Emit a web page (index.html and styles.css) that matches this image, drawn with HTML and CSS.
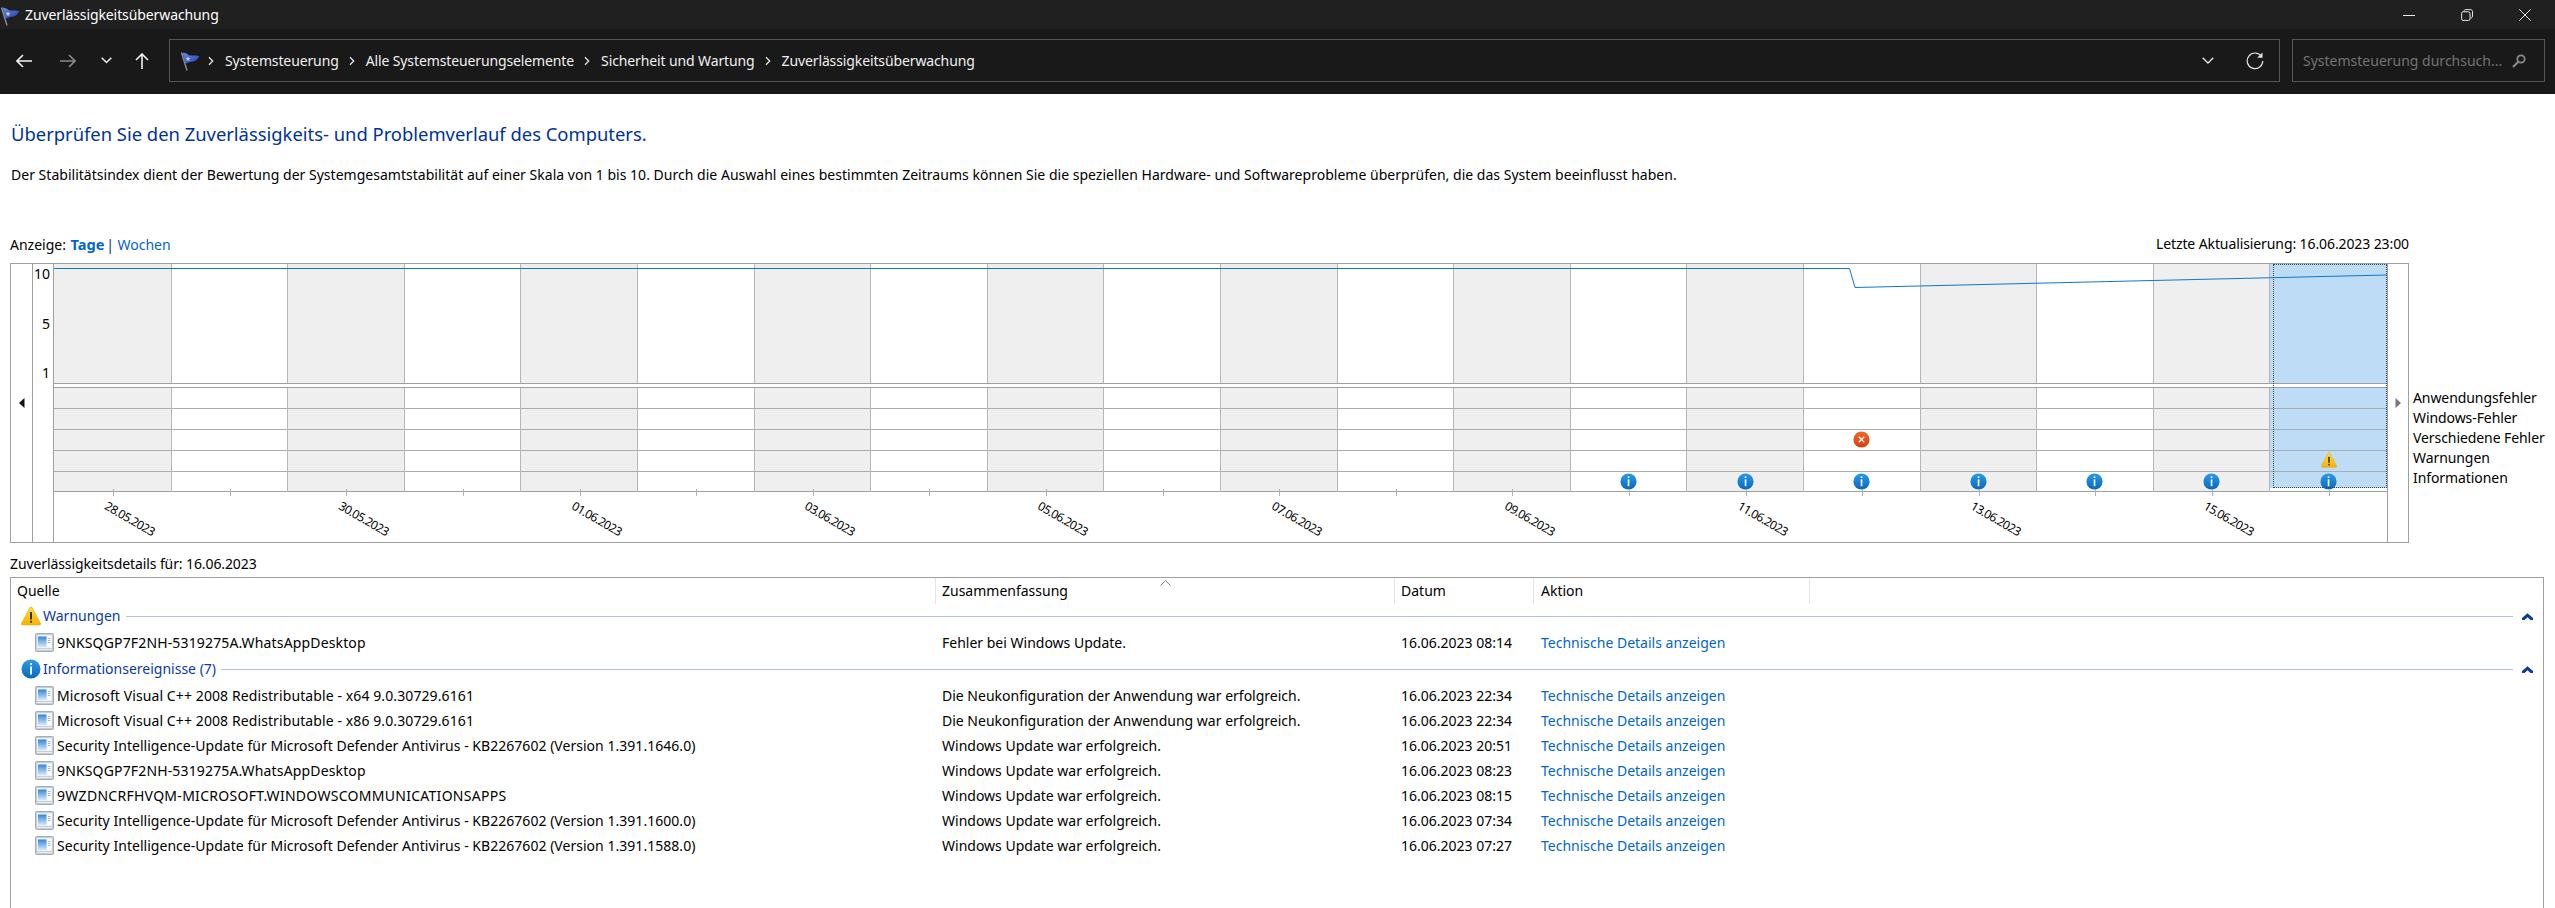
FILE: index.html
```html
<!DOCTYPE html>
<html lang="de">
<head>
<meta charset="utf-8">
<title>Zuverlässigkeitsüberwachung</title>
<link rel="stylesheet" href="styles.css">
</head>
<body>
<svg class="defs" aria-hidden="true">
  <defs>
    <linearGradient id="gBlue" x1="0" y1="0" x2="0" y2="1"><stop offset="0" stop-color="#2a9be6"/><stop offset="1" stop-color="#0a68bd"/></linearGradient>
    <linearGradient id="gRed" x1="0" y1="0" x2="0" y2="1"><stop offset="0" stop-color="#ee6a2a"/><stop offset="1" stop-color="#d63f0e"/></linearGradient>
    <linearGradient id="gYel" x1="0" y1="0" x2="0" y2="1"><stop offset="0" stop-color="#ffdc4a"/><stop offset="1" stop-color="#f5b400"/></linearGradient>
    <linearGradient id="gFlag" x1="0" y1="0" x2="1" y2="1"><stop offset="0" stop-color="#6a86e6"/><stop offset="1" stop-color="#1f3fb0"/></linearGradient>
    <linearGradient id="gApp" x1="0" y1="0" x2="0" y2="1"><stop offset="0" stop-color="#2f86d8"/><stop offset="1" stop-color="#d6e8f8"/></linearGradient>
    <symbol id="flag" viewBox="0 0 20 20">
      <path d="M1.5 1.5 L7 19.5" stroke="#8e8e8e" stroke-width="1.4" fill="none"/>
      <path d="M2.5 2 C6 .5 8 4 10 4.5 C12.5 5 15 3.5 19.5 5.5 C17 8 16.500 10 13.500 10.500 C10.500 11 8.500 11 5.500 13 Z" fill="url(#gFlag)"/>
      <path d="M8 5.500 l.7 1.600 1.700.1-1.300 1.100.4 1.600-1.500-.9-1.400.9.400-1.600-1.300-1.100 1.700-.1z" fill="#c9d6fb"/>
    </symbol>
    <symbol id="info" viewBox="0 0 20 20">
      <circle cx="10" cy="10" r="9.500" fill="url(#gBlue)"/>
      <rect x="9.100" y="4" width="1.900" height="1.900" fill="#fff"/>
      <rect x="9.100" y="7.500" width="1.900" height="8" fill="#fff"/>
    </symbol>
    <symbol id="warn" viewBox="0 0 20 20">
      <path d="M10 1 C10.600 1 11 1.300 11.300 1.900 L19.400 17.200 C19.800 18 19.400 19 18.400 19 L1.600 19 C.6 19 .2 18 .6 17.200 L8.700 1.900 C9 1.300 9.400 1 10 1 Z" fill="url(#gYel)" stroke="#e2a400" stroke-width=".6"/>
      <rect x="9.100" y="6" width="1.800" height="7.500" fill="#222"/>
      <rect x="9.100" y="14.800" width="1.800" height="1.900" fill="#222"/>
    </symbol>
    <symbol id="err" viewBox="0 0 20 20">
      <circle cx="10" cy="10" r="9.500" fill="url(#gRed)"/>
      <path d="M6.800 6.800 L13.200 13.200 M13.200 6.800 L6.800 13.200" stroke="#fff" stroke-width="1.500" fill="none"/>
    </symbol>
    <symbol id="app" viewBox="0 0 19 19">
      <rect x=".5" y=".5" width="18" height="18" rx="1" fill="#c6ccd4" stroke="#a7adb5"/>
      <rect x="2" y="2" width="15" height="13" fill="#eef3f9"/>
      <rect x="3" y="3.500" width="8.500" height="10.500" fill="url(#gApp)"/>
      <rect x="12.500" y="3.500" width="3.500" height="10.500" fill="#fff"/>
      <path d="M13 5.500h2.500M13 7.500h2.500M13 9.500h2.500" stroke="#8fa6bf" stroke-width=".8"/>
      <rect x="2" y="16" width="15" height="1" fill="#eceef1"/>
    </symbol>
    <symbol id="collapse" viewBox="0 0 11 7">
      <path d="M5.500 .2 L11 5 V7 H8.500 L5.500 4.200 L2.500 7 H0 V5 Z" fill="#0a3a9c"/>
    </symbol>
    <symbol id="crumb" viewBox="0 0 6 10">
      <path d="M1 1.200 L4.700 5 L1 8.800" stroke="#e4e4e4" stroke-width="1.300" fill="none"/>
    </symbol>
  </defs>
</svg>

<header class="titlebar">
  <svg class="title-flag"><use href="#flag"/></svg>
  <span class="title-text">Zuverlässigkeitsüberwachung</span>
  <div class="winctl">
    <svg viewBox="0 0 12 12" class="wc"><path d="M0 6.500H12" stroke="#e8e8e8" fill="none"/></svg>
    <svg viewBox="0 0 12 12" class="wc"><path d="M3 2.500 C3 1.200 3.800.6 5 .6 H9.500 C10.700.6 11.500 1.400 11.500 2.600 V7 C11.500 8.200 10.900 9 9.700 9" stroke="#e8e8e8" fill="none"/><rect x=".6" y="2.800" width="8.400" height="8.600" rx="1.500" stroke="#e8e8e8" fill="none"/></svg>
    <svg viewBox="0 0 12 12" class="wc"><path d="M.3.3 L11.700 11.700 M11.700.3 L.3 11.700" stroke="#e8e8e8" fill="none"/></svg>
  </div>
</header>

<nav class="toolbar">
  <div class="navs">
    <svg class="nav-arrow" viewBox="0 0 16 14"><path d="M16 7H1 M7 1 L1 7 L7 13" stroke="#f2f2f2" stroke-width="1.600" fill="none"/></svg>
    <svg class="nav-arrow nav-fwd" viewBox="0 0 16 14"><path d="M0 7H15 M9 1 L15 7 L9 13" stroke="#8a8a8a" stroke-width="1.600" fill="none"/></svg>
    <svg class="nav-chev" viewBox="0 0 11 7"><path d="M.7 .8 L5.500 5.500 L10.300 .8" stroke="#e8e8e8" stroke-width="1.600" fill="none"/></svg>
    <svg class="nav-up" viewBox="0 0 16 16"><path d="M8 16V1 M2 7 L8 1 L14 7" stroke="#f2f2f2" stroke-width="1.600" fill="none"/></svg>
  </div>
  <div class="address">
    <svg class="addr-flag"><use href="#flag"/></svg>
    <svg class="crumb crumb-first"><use href="#crumb"/></svg>
    <span>Systemsteuerung</span>
    <svg class="crumb"><use href="#crumb"/></svg>
    <span>Alle Systemsteuerungselemente</span>
    <svg class="crumb"><use href="#crumb"/></svg>
    <span>Sicherheit und Wartung</span>
    <svg class="crumb"><use href="#crumb"/></svg>
    <span>Zuverlässigkeitsüberwachung</span>
    <svg class="addr-drop" viewBox="0 0 12 7"><path d="M.7 .7 L6 6 L11.300 .7" stroke="#e8e8e8" stroke-width="1.300" fill="none"/></svg>
    <svg class="addr-refresh" viewBox="0 0 18 18"><path d="M15.500 4.500 A7.800 7.800 0 1 0 16.800 9" stroke="#e4e4e4" stroke-width="1.200" fill="none"/><path d="M16.500 .5 V5.800 H11.200 Z" fill="#e4e4e4"/></svg>
  </div>
  <div class="search">
    <span>Systemsteuerung durchsuch...</span>
    <svg class="search-icon" viewBox="0 0 14 14"><circle cx="9" cy="5" r="3.700" stroke="#8a8a8a" stroke-width="1.800" fill="none"/><path d="M6.300 7.700 L1 13" stroke="#8a8a8a" stroke-width="2.200" fill="none"/></svg>
  </div>
</nav>

<main class="content">
  <h1 class="heading">Überprüfen Sie den Zuverlässigkeits- und Problemverlauf des Computers.</h1>
  <p class="intro">Der Stabilitätsindex dient der Bewertung der Systemgesamtstabilität auf einer Skala von 1 bis 10. Durch die Auswahl eines bestimmten Zeitraums können Sie die speziellen Hardware- und Softwareprobleme überprüfen, die das System beeinflusst haben.</p>

  <div class="viewbar">
    <div>Anzeige: <b class="active">Tage</b> <span class="sep">|</span> <a class="link">Wochen</a></div>
    <div class="tight">Letzte Aktualisierung: 16.06.2023 23:00</div>
  </div>

  <div class="chart-row">
    <div class="chart">
      <div class="side side-left"><svg class="arrow" viewBox="0 0 6 10"><path d="M5.500 0 V10 L0 5 Z" fill="#111"/></svg></div>
      <div class="yaxis"><span>10</span><span>5</span><span>1</span></div>
      <div class="plot">
        <div class="cols upper">
          <div></div><div></div><div></div><div></div><div></div><div></div><div></div><div></div><div></div><div></div>
          <div></div><div></div><div></div><div></div><div></div><div></div><div></div><div></div><div></div><div></div>
        </div>
        <div class="cols lower">
          <div></div><div></div><div></div><div></div><div></div><div></div><div></div><div></div><div></div><div></div>
          <div></div><div></div><div></div>
          <div><svg class="mark m-info"><use href="#info"/></svg></div>
          <div><svg class="mark m-info"><use href="#info"/></svg></div>
          <div><svg class="mark m-err"><use href="#err"/></svg><svg class="mark m-info"><use href="#info"/></svg></div>
          <div><svg class="mark m-info"><use href="#info"/></svg></div>
          <div><svg class="mark m-info"><use href="#info"/></svg></div>
          <div><svg class="mark m-info"><use href="#info"/></svg></div>
          <div><svg class="mark m-warn"><use href="#warn"/></svg><svg class="mark m-info"><use href="#info"/></svg></div>
        </div>
        <div class="cols axis">
          <div><span>28.05.2023</span></div><div></div>
          <div><span>30.05.2023</span></div><div></div>
          <div><span>01.06.2023</span></div><div></div>
          <div><span>03.06.2023</span></div><div></div>
          <div><span>05.06.2023</span></div><div></div>
          <div><span>07.06.2023</span></div><div></div>
          <div><span>09.06.2023</span></div><div></div>
          <div><span>11.06.2023</span></div><div></div>
          <div><span>13.06.2023</span></div><div></div>
          <div><span>15.06.2023</span></div><div></div>
        </div>
        <svg class="trend" viewBox="0 0 2333 119" width="2333" height="119"><path d="M0 4.500 H1795.500 L1801 23.500 L2333 11" stroke="#0f78cc" stroke-width="1" fill="none"/></svg>
        <div class="focus"></div>
      </div>
      <div class="side side-right"><svg class="arrow" viewBox="0 0 6 10"><path d="M.5 0 V10 L6 5 Z" fill="#777"/></svg></div>
    </div>
    <ul class="legend">
      <li>Anwendungsfehler</li>
      <li>Windows-Fehler</li>
      <li>Verschiedene Fehler</li>
      <li>Warnungen</li>
      <li>Informationen</li>
    </ul>
  </div>

  <div class="details-label">Zuverlässigkeitsdetails für: 16.06.2023</div>

  <section class="list">
    <div class="lrow lhead">
      <div>Quelle</div>
      <div>Zusammenfassung</div>
      <div>Datum</div>
      <div>Aktion</div>
      <svg class="sort" viewBox="0 0 11 6"><path d="M.5 5.500 L5.500 .7 L10.500 5.500" stroke="#808080" fill="none"/></svg>
    </div>

    <div class="group">
      <div class="ghead"><svg class="gicon"><use href="#warn"/></svg><span>Warnungen</span><i class="gline"></i><svg class="gchev"><use href="#collapse"/></svg></div>
      <div class="lrow"><div class="src s-wa"><svg class="appicon"><use href="#app"/></svg>9NKSQGP7F2NH-5319275A.WhatsAppDesktop</div><div>Fehler bei Windows Update.</div><div>16.06.2023 08:14</div><div class="link">Technische Details anzeigen</div></div>
    </div>

    <div class="group">
      <div class="ghead"><svg class="gicon"><use href="#info"/></svg><span>Informationsereignisse (7)</span><i class="gline"></i><svg class="gchev"><use href="#collapse"/></svg></div>
      <div class="lrow"><div class="src s-vc"><svg class="appicon"><use href="#app"/></svg>Microsoft Visual C++ 2008 Redistributable - x64 9.0.30729.6161</div><div>Die Neukonfiguration der Anwendung war erfolgreich.</div><div>16.06.2023 22:34</div><div class="link">Technische Details anzeigen</div></div>
      <div class="lrow"><div class="src s-vc"><svg class="appicon"><use href="#app"/></svg>Microsoft Visual C++ 2008 Redistributable - x86 9.0.30729.6161</div><div>Die Neukonfiguration der Anwendung war erfolgreich.</div><div>16.06.2023 22:34</div><div class="link">Technische Details anzeigen</div></div>
      <div class="lrow"><div class="src s-se"><svg class="appicon"><use href="#app"/></svg>Security Intelligence-Update für Microsoft Defender Antivirus - KB2267602 (Version 1.391.1646.0)</div><div>Windows Update war erfolgreich.</div><div>16.06.2023 20:51</div><div class="link">Technische Details anzeigen</div></div>
      <div class="lrow"><div class="src s-wa"><svg class="appicon"><use href="#app"/></svg>9NKSQGP7F2NH-5319275A.WhatsAppDesktop</div><div>Windows Update war erfolgreich.</div><div>16.06.2023 08:23</div><div class="link">Technische Details anzeigen</div></div>
      <div class="lrow"><div class="src s-co"><svg class="appicon"><use href="#app"/></svg>9WZDNCRFHVQM-MICROSOFT.WINDOWSCOMMUNICATIONSAPPS</div><div>Windows Update war erfolgreich.</div><div>16.06.2023 08:15</div><div class="link">Technische Details anzeigen</div></div>
      <div class="lrow"><div class="src s-se"><svg class="appicon"><use href="#app"/></svg>Security Intelligence-Update für Microsoft Defender Antivirus - KB2267602 (Version 1.391.1600.0)</div><div>Windows Update war erfolgreich.</div><div>16.06.2023 07:34</div><div class="link">Technische Details anzeigen</div></div>
      <div class="lrow"><div class="src s-se"><svg class="appicon"><use href="#app"/></svg>Security Intelligence-Update für Microsoft Defender Antivirus - KB2267602 (Version 1.391.1588.0)</div><div>Windows Update war erfolgreich.</div><div>16.06.2023 07:27</div><div class="link">Technische Details anzeigen</div></div>
    </div>
  </section>
</main>
</body>
</html>
```
FILE: styles.css
```css
* { box-sizing: border-box; }
html, body { margin: 0; height: 100%; }
body {
  width: 2555px;
  height: 908px;
  overflow: hidden;
  display: flex;
  flex-direction: column;
  background: #fff;
  color: #000;
  font: 14px/20px "Noto Sans", "Open Sans", sans-serif;
}
svg { display: block; flex: none; }
.defs { width: 0; height: 0; overflow: hidden; position: absolute; }

/* title bar */
.titlebar {
  height: 29px;
  flex: none;
  display: flex;
  align-items: center;
  background: #202020;
  color: #fff;
}
.title-flag { width: 20px; height: 20px; margin: 2px 5px 0 0; }
.title-text { white-space: nowrap; letter-spacing: -.1px; }
.winctl { margin-left: auto; display: flex; gap: 46px; padding-right: 24px; }
.wc { width: 12px; height: 12px; }

/* address toolbar */
.toolbar {
  height: 65px;
  flex: none;
  display: flex;
  align-items: center;
  gap: 12px;
  padding: 0 10px 2px 0;
  background: #191919;
  color: #f0f0f0;
}
.navs { width: 157px; flex: none; display: flex; align-items: center; padding-left: 16px; }
.nav-arrow { width: 16px; height: 14px; }
.nav-fwd { margin-left: 28px; }
.nav-chev { width: 11px; height: 7px; margin-left: 25px; }
.nav-up { width: 16px; height: 16px; margin-left: 22px; }
.address, .search {
  height: 43px;
  display: flex;
  align-items: center;
  border: 1px solid #555;
  white-space: nowrap;
}
.address { flex: 1; padding: 0 15px 0 10px; letter-spacing: -.12px; }
.addr-flag { width: 20px; height: 20px; }
.crumb { width: 6px; height: 10px; margin: 0 11px 0 10px; }
.crumb-first { margin-left: 8px; }
.addr-drop { width: 12px; height: 7px; margin-left: auto; }
.addr-refresh { width: 18px; height: 18px; margin-left: 32px; }
.search { width: 253px; flex: none; padding: 0 18px 0 10px; color: #737373; }
.search-icon { width: 14px; height: 14px; margin-left: auto; }

/* main */
.content { flex: 1; min-height: 0; display: flex; flex-direction: column; padding: 0 11px 0 10px; }
.heading {
  margin: 27px 0 1px 1px;
  font-size: 18.4px;
  line-height: 26px;
  font-weight: 400;
  color: #003399;
  white-space: nowrap;
}
.intro { margin: 17px 0 0 1px; white-space: nowrap; letter-spacing: .02px; }
.viewbar { width: 2399px; margin-top: 49px; display: flex; justify-content: space-between; white-space: nowrap; }
.tight { letter-spacing: -.1px; }
.active { color: #0066cc; font-weight: 700; font-size: 14.6px; margin: 0 -2px 0 1px; }
.sep { color: #003399; }
.link { color: #0066cc; }

/* chart */
.chart-row { display: flex; margin-top: 8px; }
.chart {
  width: 2399px;
  height: 280px;
  flex: none;
  display: flex;
  border: 1px solid #a0a0a0;
}
.side { display: flex; align-items: center; justify-content: center; flex: none; }
.side-left { width: 22px; border-right: 1px solid #a0a0a0; }
.side-right { flex: 1; }
.arrow { width: 6px; height: 10px; }
.yaxis {
  width: 21px;
  flex: none;
  display: flex;
  flex-direction: column;
  gap: 29.5px;
  padding-right: 3px;
  text-align: right;
  border-right: 1px solid #a0a0a0;
}
.plot {
  width: 2334px;
  flex: none;
  position: relative;
  border-right: 1px solid #a0a0a0;
}
.cols { display: grid; grid-template-columns: 117.6px repeat(19, 1fr); }
.upper { height: 120px; border-bottom: 1px solid #a0a0a0; }
.upper > div, .lower > div { border-right: 1px solid #b6b6b6; }
.upper > div:nth-child(odd), .lower > div:nth-child(odd) { background-color: #efefef; }
.upper > div:last-child { background: #bedcf6; border-right: 0; }
.lower { margin-top: 3px; height: 105px; border-top: 1px solid #a0a0a0; }
.lower > div {
  --rows: linear-gradient(to bottom,
    transparent 20px, #acacac 20px 21px,
    transparent 21px 41px, #acacac 41px 42px,
    transparent 42px 62px, #acacac 62px 63px,
    transparent 63px 83px, #acacac 83px 84px,
    transparent 84px 103px, #a0a0a0 103px 104px);
  display: grid;
  grid-template-rows: repeat(4, 21px) 20px;
  justify-items: center;
  background-image: var(--rows);
}
.lower > div:last-child {
  border-right: 0;
  background: var(--rows), linear-gradient(#bedcf6, #bedcf6) 0 0 / 100% 100px no-repeat;
}
.mark { width: 17px; height: 17px; align-self: center; }
.m-info { grid-row: 5; margin-top: -2px; }
.m-err { grid-row: 3; margin-top: -2px; }
.m-warn { grid-row: 4; width: 16px; height: 16px; margin-top: -4px; }
.axis > div { position: relative; display: flex; justify-content: center; padding-top: 19px; }
.axis > div::before {
  content: "";
  position: absolute;
  left: 50%;
  top: -3px;
  width: 1px;
  height: 7px;
  background: #b0b0b0;
}
.axis span {
  font-size: 12px;
  line-height: 16px;
  letter-spacing: -.6px;
  white-space: nowrap;
  transform: translateX(17px) rotate(30deg);
}
.trend { position: absolute; left: 0; top: 0; }
.focus {
  position: absolute;
  top: 0;
  right: 0;
  width: 114px;
  height: 224px;
  border: 1px dotted #444;
}
.legend { list-style: none; margin: 0 0 0 4px; padding: 125px 0 0; white-space: nowrap; letter-spacing: -.08px; }

/* details */
.details-label { margin-top: 11px; letter-spacing: -.1px; }
.list {
  flex: 1;
  margin-top: 3px;
  border: 1px solid #a0a0a0;
  border-bottom: 0;
  white-space: nowrap;
}
.lrow {
  display: grid;
  grid-template-columns: 925px 459px 139px 276px;
  height: 25px;
  align-items: center;
}
.lrow > div { padding-left: 6px; }
.lrow > div:last-of-type { padding-left: 7px; }
.lhead { height: 25px; position: relative; align-items: stretch; }
.lhead > div { border-right: 1px solid #e5e5e5; line-height: 26px; }
.sort { position: absolute; left: 1149px; top: 2px; width: 11px; height: 6px; }
.src { display: flex; align-items: center; gap: 3px; padding-left: 24px !important; }
.s-wa { letter-spacing: .15px; }
.s-vc { letter-spacing: .1px; }
.s-se { letter-spacing: .03px; }
.s-co { letter-spacing: .28px; }
.appicon { width: 19px; height: 19px; }
.group { padding-bottom: 1px; }
.ghead { height: 26px; margin-bottom: 1px; display: flex; align-items: center; padding: 0 10px; color: #0a3aa8; }
.gicon { width: 20px; height: 20px; margin-right: 2px; }
.gline { flex: 1; height: 1px; margin: 0 5px; background: #b4bfd9; }
.gchev { width: 11px; height: 7px; margin-left: 4px; }
```
